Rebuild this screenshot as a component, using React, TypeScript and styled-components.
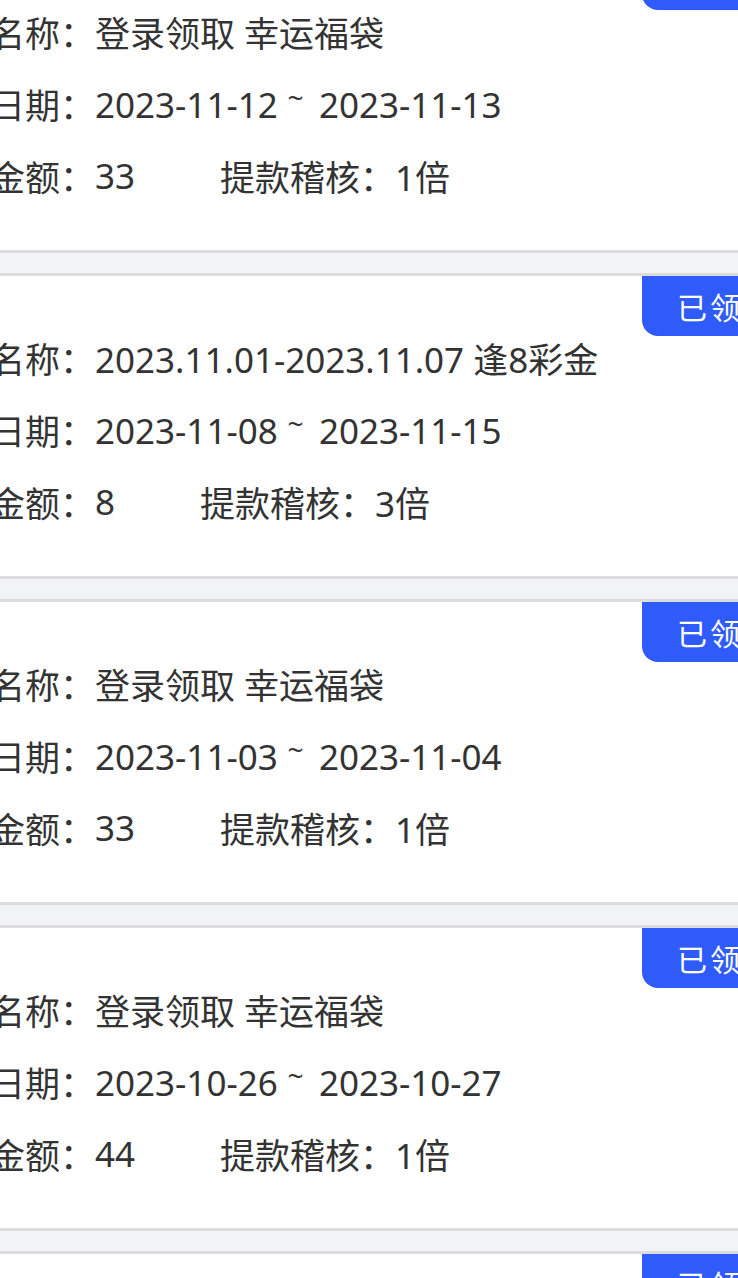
import styled, { createGlobalStyle } from 'styled-components';

const GlobalStyle = createGlobalStyle`
  html, body {
    margin: 0;
    padding: 0;
    background: #f2f3f5;
  }
  body {
    font-family: 'Noto Sans', 'Noto Sans CJK SC', sans-serif;
    color: #333;
  }
`;

const Page = styled.div`
  width: 100%;
  overflow: hidden;
`;

const RecordList = styled.ul`
  list-style: none;
  width: 820px;
  margin: -53px 0 0 -10px;
  padding: 0;
`;

const Record = styled.li`
  position: relative;
  background: #fff;
  border-top: 3px solid #dcdcdc;
  border-bottom: 3px solid #dcdcdc;
  margin-bottom: 20px;
  padding: 45px 0 39px;
`;

const Badge = styled.span`
  position: absolute;
  top: 0;
  right: 0;
  height: 60px;
  line-height: 60px;
  padding: 0 34px 0 35px;
  background: #2f5bfa;
  color: #fff;
  font-size: 30px;
  letter-spacing: 3px;
  font-family: 'Noto Sans CJK SC', sans-serif;
  border-bottom-left-radius: 16px;
`;

const Row = styled.div`
  display: flex;
  align-items: center;
  height: 72px;
  font-size: 35px;
  white-space: nowrap;
`;

const Label = styled.span`
  font-family: 'Noto Sans CJK SC', sans-serif;
`;

const Value = styled.span<{ $gap?: number }>`
  margin-right: ${(p) => p.$gap ?? 0}px;
`;

// the range tilde sits high and small, like a CJK font's ~
const Tilde = styled.span`
  display: inline-block;
  font-size: 0.8em;
  vertical-align: 0.35em;
  margin: 0 0.55em 0 0.35em;
`;

interface BonusRecord {
  id: number;
  name: string;
  start: string;
  end: string;
  amount: number;
  multiple: number;
}

const records: BonusRecord[] = [
  { id: 1, name: '登录领取 幸运福袋', start: '2023-11-12', end: '2023-11-13', amount: 33, multiple: 1 },
  { id: 2, name: '2023.11.01-2023.11.07 逢8彩金', start: '2023-11-08', end: '2023-11-15', amount: 8, multiple: 3 },
  { id: 3, name: '登录领取 幸运福袋', start: '2023-11-03', end: '2023-11-04', amount: 33, multiple: 1 },
  { id: 4, name: '登录领取 幸运福袋', start: '2023-10-26', end: '2023-10-27', amount: 44, multiple: 1 },
  { id: 5, name: '登录领取 幸运福袋', start: '2023-10-19', end: '2023-10-20', amount: 33, multiple: 1 },
];

export default function App() {
  return (
    <Page>
      <GlobalStyle />
      <RecordList>
        {records.map((r) => (
          <Record key={r.id}>
            <Badge>已领取</Badge>
            <Row>
              <Label>名称：</Label>
              <Value>{r.name}</Value>
            </Row>
            <Row>
              <Label>日期：</Label>
              <Value>
                {r.start}
                <Tilde>~</Tilde>
                {r.end}
              </Value>
            </Row>
            <Row>
              <Label>金额：</Label>
              <Value $gap={85}>{r.amount}</Value>
              <Label>提款稽核：</Label>
              <Value>{r.multiple}倍</Value>
            </Row>
          </Record>
        ))}
      </RecordList>
    </Page>
  );
}
